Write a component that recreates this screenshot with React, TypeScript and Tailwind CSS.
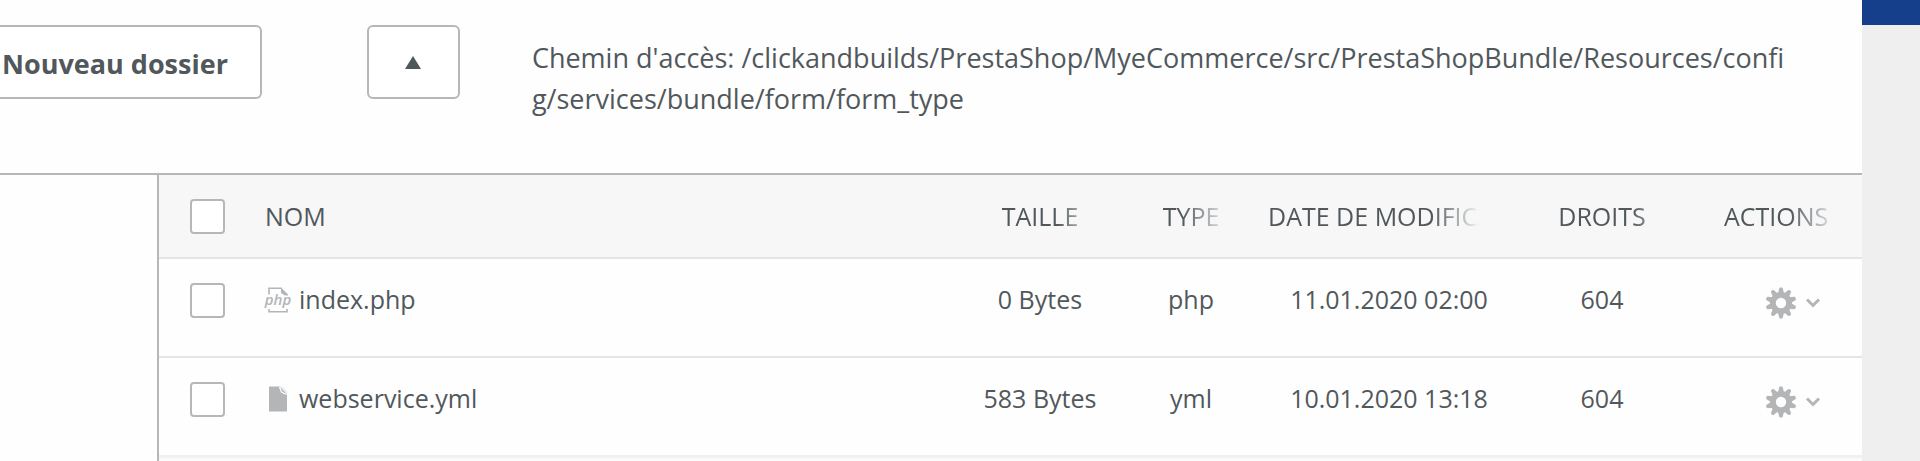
import React from 'react';

interface FileEntry {
  name: string;
  size: string;
  type: string;
  modified: string;
  rights: string;
}

const files: FileEntry[] = [
  { name: 'index.php', size: '0 Bytes', type: 'php', modified: '11.01.2020 02:00', rights: '604' },
  { name: 'webservice.yml', size: '583 Bytes', type: 'yml', modified: '10.01.2020 13:18', rights: '604' },
];

const teeth = [0, 36, 72, 108, 144, 180, 216, 252, 288, 324];

const Gear = () => (
  <svg viewBox="0 0 32 32" className="h-8 w-8" fill="#b3b5b7" aria-hidden="true">
    <path fillRule="evenodd" d="M16 5a11 11 0 1 0 0 22a11 11 0 1 0 0-22zM16 10.800a5.200 5.200 0 1 1 0 10.400a5.200 5.200 0 1 1 0-10.400z" />
    {teeth.map((a) => (
      <path key={a} transform={`rotate(${a} 16 16)`} d="M13 6.500L14.200 1.500Q14.500 .6 15.200 .6H16.800Q17.500 .6 17.800 1.500L19 6.500z" />
    ))}
  </svg>
);

const PhpIcon = () => (
  <svg viewBox="0 0 26 26" className="h-[26px] w-[26px] overflow-visible" aria-hidden="true">
    <path d="M4 7.500V1.200H16.500M4 22v2.800h18V22" fill="none" stroke="#b3b5b7" strokeWidth="1.600" />
    <path d="M16 .4L23 7.500V8.500H20L16 6z" fill="#b3b5b7" />
    <text x="13" y="18" textAnchor="middle" fontSize="15" fontStyle="italic" fontWeight="600" fill="#b3b5b7">php</text>
  </svg>
);

const PlainFileIcon = () => (
  <svg viewBox="0 0 26 26" className="h-[26px] w-[26px]" aria-hidden="true">
    <path d="M4 .5H14.500L22 8V25.500H4z" fill="#b3b5b7" />
    <path d="M14.500 1L16.500 6L21.500 8.500" fill="none" stroke="#fff" strokeWidth="1.200" />
    <path d="M16 .5L22 6.500" fill="none" stroke="#d6d7d8" strokeWidth="1" />
  </svg>
);

const Checkbox = ({ label }: { label: string }) => (
  <input
    type="checkbox"
    aria-label={label}
    className="block h-[35px] w-[35px] appearance-none rounded-sm border-2 border-[#b5b7b8] bg-white checked:bg-[#163f8b]"
  />
);

// long column titles fade out instead of wrapping
const fade = 'overflow-hidden whitespace-nowrap [mask-image:linear-gradient(to_right,black_calc(100%-48px),transparent)]';

const App: React.FC = () => {
  return (
    <div className="flex min-h-screen bg-[#efefef] font-['Open_Sans',sans-serif] text-[25px] leading-[41px] font-medium text-[#51585c]">
      <main className="flex min-w-0 flex-1 flex-col bg-[#fefefe]">
        <header className="flex items-start border-b-2 border-[#b5b7b8] pt-[25px] pb-[54px] text-[27px]">
          <button type="button" className="h-[74px] shrink-0 rounded-r-md border-2 border-l-0 border-[#b5b7b8] bg-white pt-0.5 pr-8 pl-0.5 font-bold">
            Nouveau dossier
          </button>
          <button type="button" aria-label="Dossier parent" className="ml-[105px] flex h-[74px] w-[93px] shrink-0 items-center justify-center rounded-md border-2 border-[#b5b7b8] bg-white">
            <svg viewBox="0 0 16 13" className="h-[13px] w-4" fill="#51585c" aria-hidden="true">
              <path d="M8 0L16 13H0z" />
            </svg>
          </button>
          <p className="mr-16 ml-[72px] min-w-0 flex-1 pt-3 break-all">
            Chemin d'accès: /clickandbuilds/PrestaShop/MyeCommerce/src/PrestaShopBundle/Resources/config/services/bundle/form/form_type
          </p>
        </header>

        <div className="flex flex-1">
          <aside className="w-[159px] shrink-0 border-r-2 border-[#b5b7b8]" />
          <section className="min-w-0 flex-1">
            <table className="w-full table-fixed">
              <colgroup>
                <col className="w-[106px]" />
                <col />
                <col className="w-[176px]" />
                <col className="w-[126px]" />
                <col className="w-[270px]" />
                <col className="w-[156px]" />
                <col className="w-[182px]" />
              </colgroup>
              <thead>
                <tr className="h-[83px] border-b-2 border-[#e4e5e5] bg-[#f7f7f7] [&>th]:p-0 [&>th]:font-medium">
                  <th><div className="pl-[31px]"><Checkbox label="Tout sélectionner" /></div></th>
                  <th className="text-left">NOM</th>
                  <th><div className={`mx-6 ${fade}`}>TAILLE</div></th>
                  <th><div className={`mx-6 ${fade}`}>TYPE</div></th>
                  <th><div className={`mr-11 ml-3.5 text-left ${fade}`}>DATE DE MODIFICATION</div></th>
                  <th><div className={fade}>DROITS</div></th>
                  <th><div className={`mr-6 ml-11 text-left ${fade}`}>ACTIONS</div></th>
                </tr>
              </thead>
              <tbody>
                {files.map((file) => (
                  <tr key={file.name} className="h-[99px] border-b-2 border-[#e4e5e5] text-center last:border-[#efefef] [&>td]:p-0 [&>td]:pt-5 [&>td]:align-top">
                    <td><div className="pt-1 pl-[31px]"><Checkbox label={file.name} /></div></td>
                    <td>
                      <div className="flex items-center gap-2">
                        {file.type === 'php' ? <PhpIcon /> : <PlainFileIcon />}
                        <a href="#" className="truncate">{file.name}</a>
                      </div>
                    </td>
                    <td>{file.size}</td>
                    <td>{file.type}</td>
                    <td>{file.modified}</td>
                    <td>{file.rights}</td>
                    <td>
                      <button type="button" aria-label={`Actions pour ${file.name}`} className="ml-[85px] flex items-center gap-2 pt-2">
                        <Gear />
                        <svg viewBox="0 0 16 10" className="h-2.5 w-4" fill="none" stroke="#b3b5b7" strokeWidth="3" aria-hidden="true">
                          <path d="M2 1.500L8 7.500L14 1.500" />
                        </svg>
                      </button>
                    </td>
                  </tr>
                ))}
              </tbody>
            </table>
            <div className="h-1 bg-linear-to-b from-[#f4f4f4] to-[#fefefe]" />
          </section>
        </div>
      </main>

      <aside className="w-[58px] shrink-0">
        <div className="h-[25px] bg-[#163f8b]" />
      </aside>
    </div>
  );
};

export default App;
